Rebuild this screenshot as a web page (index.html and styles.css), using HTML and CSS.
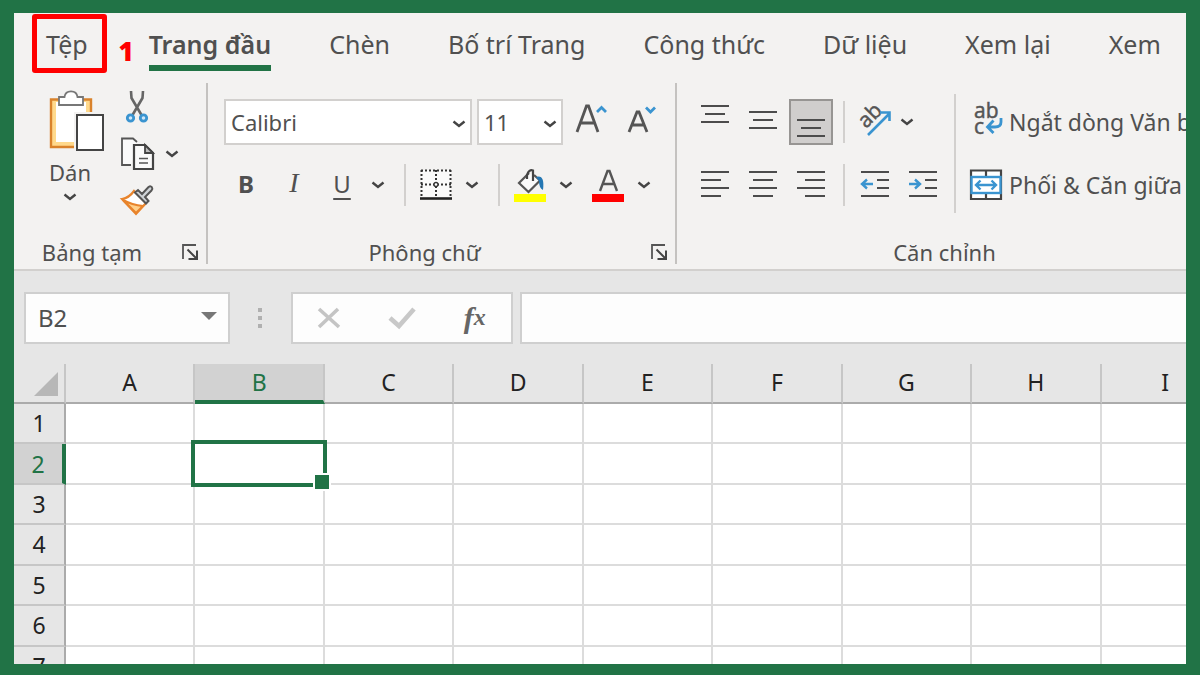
FILE: index.html
```html
<!DOCTYPE html>
<html lang="vi">
<head>
    <meta charset="UTF-8">
    <meta name="viewport" content="width=device-width, initial-scale=1.0">
    <title>Excel</title>
    <link rel="stylesheet" href="styles.css">
</head>
<body>
    <svg class="defs" aria-hidden="true">
        <symbol id="chevron" viewBox="0 0 14 10">
            <path d="M1.5 2.5 L7 7 L12.5 2.5" fill="none" stroke="#444" stroke-width="2.4"/>
        </symbol>
        <symbol id="launcher" viewBox="0 0 18 18">
            <path d="M2 16 V2 H15" fill="none" stroke="#555" stroke-width="1.8"/>
            <path d="M6.5 6.5 L15 15 M16 7.5 V16 H7.5" fill="none" stroke="#444" stroke-width="2"/>
        </symbol>
    </svg>

    <div class="window">
        <nav class="tabs">
            <button class="tab tab-file">Tệp<span class="mark"></span><span class="step">1</span></button>
            <button class="tab active">Trang đầu</button>
            <button class="tab">Chèn</button>
            <button class="tab">Bố trí Trang</button>
            <button class="tab">Công thức</button>
            <button class="tab">Dữ liệu</button>
            <button class="tab">Xem lại</button>
            <button class="tab">Xem</button>
        </nav>

        <div class="ribbon">
            <section class="group clipboard">
                <div class="clipboard-tools">
                    <button class="paste">
                        <svg width="56" height="62" viewBox="0 0 56 62">
                            <rect x="2" y="9" width="40" height="48" fill="#ffd98c"/>
                            <rect x="7" y="12" width="30" height="40" fill="#fff"/>
                            <path d="M42 24 V9.5 H2 V57 H26" fill="none" stroke="#d9822b" stroke-width="2.4"/>
                            <path d="M10 15 V7 H15.5 C16.5 -0.5 27.5 -0.5 28.5 7 H34 V15 Z" fill="#fff" stroke="#777" stroke-width="1.8"/>
                            <rect x="25" y="22" width="31" height="40" fill="#f3f2f1"/>
                            <rect x="28" y="25" width="26" height="35" fill="#fff" stroke="#444" stroke-width="2"/>
                        </svg>
                        <span>Dán</span>
                        <svg class="paste-more" width="14" height="10"><use href="#chevron"/></svg>
                    </button>
                    <div class="clipboard-side">
                        <button aria-label="Cắt">
                            <svg width="24" height="34" viewBox="0 0 24 34">
                                <path d="M6 1 L6.5 8 L16.5 25 M18 1 L17.5 8 L7.5 25" fill="none" stroke="#666" stroke-width="2.6"/>
                                <circle cx="5.5" cy="28" r="3.2" fill="#cfe6f7" stroke="#3a94d0" stroke-width="2.8"/>
                                <circle cx="18.5" cy="28" r="3.2" fill="#cfe6f7" stroke="#3a94d0" stroke-width="2.8"/>
                            </svg>
                        </button>
                        <div class="copy-row">
                            <button aria-label="Sao chép">
                                <svg width="34" height="34" viewBox="0 0 34 34">
                                    <path d="M11 28 H2 V1.5 H13 L17 5" fill="#fafafa" stroke="#555" stroke-width="1.8"/>
                                    <path d="M14 8 H25 L33 16 V32 H14 Z" fill="#fafafa" stroke="#444" stroke-width="2.2"/>
                                    <path d="M25 8 V16 H33 Z" fill="#bbb" stroke="#444" stroke-width="1.8"/>
                                    <path d="M19 21.5 H28 M19 26 H28" stroke="#555" stroke-width="1.6"/>
                                </svg>
                            </button>
                            <button class="drop" aria-label="Tùy chọn sao chép"><svg width="14" height="10"><use href="#chevron"/></svg></button>
                        </div>
                        <button aria-label="Sao chép định dạng">
                            <svg width="34" height="32" viewBox="0 0 34 32">
                                <path d="M2 15 Q9 14 14 7 L26 19 L16 30 Z" fill="#fff" stroke="#e8842c" stroke-width="2.2"/>
                                <path d="M3 16 Q12 21 23 22 L16 29 Z" fill="#ffd08a" stroke="#e8842c" stroke-width="2.2"/>
                                <path d="M15 8.5 L18 6 L22 10 L28.5 3 Q31 1.5 32 3.5 Q33 5 31.5 6.5 L25 13 L28.5 17 L26 19.5 Z" fill="#d0d4d8" stroke="#555" stroke-width="2"/>
                            </svg>
                        </button>
                    </div>
                </div>
                <footer class="group-footer">
                    <span>Bảng tạm</span>
                    <button class="launch" aria-label="Bảng tạm"><svg width="18" height="18"><use href="#launcher"/></svg></button>
                </footer>
            </section>

            <section class="group font">
                <div class="row font-pick">
                    <div class="combo combo-name">
                        <select aria-label="Phông chữ"><option>Calibri</option></select>
                        <svg width="14" height="10"><use href="#chevron"/></svg>
                    </div>
                    <div class="combo combo-size">
                        <select aria-label="Cỡ chữ"><option>11</option></select>
                        <svg width="14" height="10"><use href="#chevron"/></svg>
                    </div>
                    <button class="resize" aria-label="Tăng cỡ chữ">
                        <svg width="32" height="44" viewBox="0 0 32 44">
                            <path d="M2 32 L11.5 6 H13.5 L23 32 M5.5 23 H19.5" fill="none" stroke="#555" stroke-width="2.8"/>
                            <path d="M22 12 L26.5 7.5 L31 12" fill="none" stroke="#3a94d0" stroke-width="2.8"/>
                        </svg>
                    </button>
                    <button class="resize" aria-label="Giảm cỡ chữ">
                        <svg width="32" height="44" viewBox="0 0 32 44">
                            <path d="M3 32 L11 12 H13 L21 32 M6 25 H18" fill="none" stroke="#555" stroke-width="2.8"/>
                            <path d="M20 7.5 L24.5 12 L29 7.5" fill="none" stroke="#3a94d0" stroke-width="2.8"/>
                        </svg>
                    </button>
                </div>
                <div class="row">
                    <button class="tool bold">B</button>
                    <button class="tool italic">I</button>
                    <button class="tool underline">U</button>
                    <button class="drop" aria-label="Kiểu gạch chân"><svg width="14" height="10"><use href="#chevron"/></svg></button>
                    <span class="sep"></span>
                    <button class="tool" aria-label="Viền">
                        <svg width="32" height="44" viewBox="0 0 32 44">
                            <rect x="1" y="7" width="30" height="28" fill="#fafafa"/>
                            <path d="M1 7.5 H31 M1 21.5 H31" stroke="#333" stroke-width="2" stroke-dasharray="2 2"/>
                            <path d="M1.5 7 V34 M16 7 V34 M30.5 7 V34" stroke="#333" stroke-width="2" stroke-dasharray="2 2"/>
                            <circle cx="16" cy="21.5" r="2" fill="#fff" stroke="#333" stroke-width="1.3"/>
                            <path d="M0 35.5 H32" stroke="#222" stroke-width="2.6"/>
                        </svg>
                    </button>
                    <button class="drop" aria-label="Kiểu viền"><svg width="14" height="10"><use href="#chevron"/></svg></button>
                    <span class="sep"></span>
                    <button class="tool" aria-label="Màu tô">
                        <svg width="32" height="44" viewBox="0 0 32 44">
                            <path d="M15 10 L5 20 L14.5 29 L26 17.5 L20 12" fill="#fafafa" stroke="#555" stroke-width="2.2"/>
                            <path d="M13 16 V12 Q15 6 19 7.5 V18" fill="none" stroke="#444" stroke-width="2.2"/>
                            <path d="M22 14 Q31 11 29 27 Q25 25 25 18 Z" fill="#2477b3"/>
                            <rect y="31" width="32" height="8" fill="#ff0"/>
                        </svg>
                    </button>
                    <button class="drop drop-gap" aria-label="Chọn màu tô"><svg width="14" height="10"><use href="#chevron"/></svg></button>
                    <button class="tool" aria-label="Màu phông chữ">
                        <svg width="32" height="44" viewBox="0 0 32 44">
                            <path d="M8 28 L15.5 8 H17.5 L25 28 M11 21 H22" fill="none" stroke="#555" stroke-width="2.4"/>
                            <rect y="31" width="32" height="8" fill="#f00"/>
                        </svg>
                    </button>
                    <button class="drop" aria-label="Chọn màu phông chữ"><svg width="14" height="10"><use href="#chevron"/></svg></button>
                </div>
                <footer class="group-footer">
                    <span>Phông chữ</span>
                    <button class="launch" aria-label="Phông chữ"><svg width="18" height="18"><use href="#launcher"/></svg></button>
                </footer>
            </section>

            <section class="group align">
                <div class="align-tools">
                    <div class="align-icons">
                        <div class="row">
                            <button class="tool" aria-label="Căn trên"><svg width="30" height="44"><path class="lines" d="M1 6 H29 M5 14 H25 M1 22 H29"/></svg></button>
                            <button class="tool" aria-label="Căn giữa dọc"><svg width="30" height="44"><path class="lines" d="M1 12 H29 M5 20 H25 M1 28 H29"/></svg></button>
                            <button class="tool pressed" aria-label="Căn dưới"><svg width="30" height="44"><path class="lines" d="M1 20 H29 M5 28 H25 M1 36 H29"/></svg></button>
                            <span class="sep sep-tight"></span>
                            <button class="tool orient" aria-label="Hướng">
                                <svg width="36" height="44" viewBox="0 0 36 44">
                                    <text class="glyph" x="0" y="0" font-size="21" transform="translate(11 29) rotate(-45)">ab</text>
                                    <path d="M13 35 L34 14 M25 12.5 H34.5 V21" fill="none" stroke="#3a94d0" stroke-width="2.6"/>
                                </svg>
                            </button>
                            <button class="drop" aria-label="Chọn hướng"><svg width="14" height="10"><use href="#chevron"/></svg></button>
                        </div>
                        <div class="row">
                            <button class="tool" aria-label="Căn trái"><svg width="30" height="44"><path class="lines" d="M1 9 H29 M1 17 H21 M1 25 H29 M1 33 H21"/></svg></button>
                            <button class="tool" aria-label="Căn giữa"><svg width="30" height="44"><path class="lines" d="M1 9 H29 M5 17 H25 M1 25 H29 M5 33 H25"/></svg></button>
                            <button class="tool" aria-label="Căn phải"><svg width="30" height="44"><path class="lines" d="M1 9 H29 M9 17 H29 M1 25 H29 M9 33 H29"/></svg></button>
                            <span class="sep sep-tight"></span>
                            <button class="tool" aria-label="Giảm thụt lề"><svg width="30" height="44"><path class="lines" d="M1 9 H29 M17 17 H29 M17 25 H29 M1 33 H29"/><path class="arrow" d="M13 21 H2 M7 16.5 L2 21 L7 25.5"/></svg></button>
                            <button class="tool" aria-label="Tăng thụt lề"><svg width="30" height="44"><path class="lines" d="M1 9 H29 M17 17 H29 M17 25 H29 M1 33 H29"/><path class="arrow" d="M1 21 H12 M7 16.5 L12 21 L7 25.5"/></svg></button>
                        </div>
                    </div>
                    <div class="align-text">
                        <button class="wide">
                            <svg width="34" height="44" viewBox="0 0 34 44">
                                <text class="glyph" x="4" y="18" font-size="21">ab</text>
                                <text class="glyph" x="4" y="34" font-size="21">c</text>
                                <path d="M31 18 V22 Q31 27 25 27 H18 M23.500 20.500 L17.500 27 L23.500 33" fill="none" stroke="#3a94d0" stroke-width="2.800"/>
                            </svg>
                            Ngắt dòng Văn bản
                        </button>
                        <button class="wide">
                            <svg width="34" height="44" viewBox="0 0 34 44">
                                <path d="M1 7.500 H31 V36 H1 Z M16 7 V14 M16 30 V36" fill="#fff" stroke="#444" stroke-width="2.2"/>
                                <rect x="1.500" y="14" width="29" height="16" fill="#fff" stroke="#3a94d0" stroke-width="2.400"/>
                                <path d="M6 22 H26 M10.500 17.500 L6 22 L10.500 26.500 M21.500 17.500 L26 22 L21.500 26.500" fill="none" stroke="#3a94d0" stroke-width="2.400"/>
                            </svg>
                            Phối &amp; Căn giữa
                        </button>
                    </div>
                </div>
                <footer class="group-footer"><span>Căn chỉnh</span></footer>
            </section>
        </div>

        <div class="formula-bar">
            <div class="name-box">
                <input type="text" value="B2" aria-label="Hộp tên">
                <button aria-label="Danh sách tên"><svg width="16" height="10"><path d="M0 1 H16 L8 9 Z" fill="#777"/></svg></button>
            </div>
            <svg class="grip" width="6" height="22"><path d="M1 1 h4 v4 h-4 Z M1 9 h4 v4 h-4 Z M1 17 h4 v4 h-4 Z" fill="#b0b0b0"/></svg>
            <div class="fx-box">
                <button aria-label="Hủy"><svg width="26" height="24"><path d="M3 3 L23 21 M22 3 L3 21" fill="none" stroke="#c4c4c4" stroke-width="3.6"/></svg></button>
                <button aria-label="Nhập"><svg width="28" height="24"><path d="M2 12 L11 20 L26 3" fill="none" stroke="#c8c8c8" stroke-width="4.6"/></svg></button>
                <button class="fx" aria-label="Chèn hàm">f<small>x</small></button>
            </div>
            <input class="formula" type="text" aria-label="Thanh công thức">
        </div>

        <div class="sheet">
            <table>
                <thead>
                    <tr>
                        <th class="corner"><svg width="24" height="24"><path d="M24 0 V24 H0 Z" fill="#b7b7b7"/></svg></th>
                        <th>A</th><th class="current">B</th><th>C</th><th>D</th><th>E</th><th>F</th><th>G</th><th>H</th><th>I</th>
                    </tr>
                </thead>
                <tbody>
                    <tr><th>1</th><td></td><td></td><td></td><td></td><td></td><td></td><td></td><td></td><td></td></tr>
                    <tr><th class="current">2</th><td></td><td class="selected"><span class="cursor"></span></td><td></td><td></td><td></td><td></td><td></td><td></td><td></td></tr>
                    <tr><th>3</th><td></td><td></td><td></td><td></td><td></td><td></td><td></td><td></td><td></td></tr>
                    <tr><th>4</th><td></td><td></td><td></td><td></td><td></td><td></td><td></td><td></td><td></td></tr>
                    <tr><th>5</th><td></td><td></td><td></td><td></td><td></td><td></td><td></td><td></td><td></td></tr>
                    <tr><th>6</th><td></td><td></td><td></td><td></td><td></td><td></td><td></td><td></td><td></td></tr>
                    <tr><th>7</th><td></td><td></td><td></td><td></td><td></td><td></td><td></td><td></td><td></td></tr>
                </tbody>
            </table>
        </div>
    </div>
</body>
</html>
```
FILE: styles.css
```css
* {
    margin: 0;
    padding: 0;
    box-sizing: border-box;
}

body {
    height: 100vh;
    padding: 13px 14px 11px;
    background: #217346;
    font-family: 'Noto Sans', 'Open Sans', sans-serif;
    font-size: 22px;
    color: #505050;
    overflow: hidden;
}

button, input, select {
    font: inherit;
    color: inherit;
    background: none;
    border: none;
    border-radius: 0;
}

button {
    display: flex;
    align-items: center;
    justify-content: center;
    white-space: nowrap;
}

svg {
    display: block;
    flex: none;
    overflow: visible;
}

.defs {
    position: absolute;
    width: 0;
    height: 0;
}

.window {
    display: flex;
    flex-direction: column;
    height: 100%;
    background: #e6e6e6;
    overflow: hidden;
}

/* tabs */
.tabs {
    display: flex;
    gap: 58px;
    height: 70px;
    padding: 8px 0 12px 32px;
    background: #f3f2f1;
    font-size: 25px;
}

.tab {
    position: relative;
    height: 50px;
    padding-bottom: 4px;
    flex: none;
}

.tab-file {
    padding-right: 3px;
}

.tab.active {
    font-weight: 600;
}

.tab.active::after {
    content: '';
    position: absolute;
    left: 0;
    right: 0;
    bottom: 0;
    height: 6px;
    background: #217346;
}

.mark {
    position: absolute;
    top: -7px;
    bottom: -2px;
    left: -14px;
    right: -16px;
    border: 5px solid #f00;
    border-radius: 3px;
}

.step {
    position: absolute;
    top: 14px;
    right: -43px;
    color: #f00;
    font-family: 'Open Sans', sans-serif;
    font-size: 26px;
    font-weight: 800;
    line-height: 32px;
}

/* ribbon */
.ribbon {
    display: flex;
    padding-bottom: 5px;
    background: #f3f2f1;
    border-bottom: 2px solid #d2d0ce;
}

.group {
    display: flex;
    flex-direction: column;
    flex: none;
    border-right: 2px solid #c4c2c0;
}

.group-footer {
    display: flex;
    align-items: center;
    margin-top: auto;
    height: 24px;
    line-height: 24px;
}

.group-footer span {
    flex: 1;
    text-align: center;
}

.launch {
    width: 32px;
    height: 24px;
}

.row {
    display: flex;
    align-items: center;
    height: 46px;
}

.tool {
    width: 48px;
    height: 44px;
    flex: none;
}

.drop {
    width: 24px;
    height: 44px;
    flex: none;
}

.drop-gap {
    margin-right: 6px;
}

.sep {
    width: 2px;
    height: 42px;
    margin: 0 6px 0 14px;
    background: #d2d0ce;
}

.sep-tight {
    margin-left: 8px;
}

.clipboard {
    width: 194px;
}

.clipboard-tools {
    display: flex;
    gap: 8px;
    padding: 7px 0 0 35px;
}

.paste {
    flex-direction: column;
    align-items: flex-start;
    justify-content: flex-start;
    gap: 5px;
    width: 56px;
    height: 124px;
    line-height: 30px;
}

.paste-more {
    margin-left: 14px;
}

.clipboard-side {
    display: flex;
    flex-direction: column;
    align-items: flex-start;
    gap: 13px;
    padding-left: 7px;
}

.clipboard-side > button:first-child {
    width: 34px;
}

.copy-row {
    display: flex;
    align-items: center;
    height: 34px;
    gap: 6px;
}

.clipboard .group-footer span {
    padding-right: 4px;
}

.font {
    width: 469px;
    height: 181px;
    padding: 16px 0 0 14px;
    gap: 17px;
}

.font .group-footer span {
    padding-right: 16px;
}

.font-pick {
    padding-left: 2px;
    gap: 5px;
}

.combo {
    position: relative;
    height: 46px;
    background: #fff;
    border: 2px solid #d2d0ce;
}

.combo select {
    width: 100%;
    height: 100%;
    padding: 0 5px;
    appearance: none;
}

.combo svg {
    position: absolute;
    right: 4px;
    top: 18px;
    pointer-events: none;
}

.combo-name {
    width: 248px;
}

.combo-size {
    width: 86px;
}

.resize {
    width: 46px;
    height: 44px;
}

.bold {
    font-size: 24px;
    font-weight: 700;
}

.italic {
    font-family: 'Liberation Serif', serif;
    font-size: 28px;
    font-style: italic;
}

.underline {
    font-size: 24px;
    text-decoration: underline;
    text-decoration-thickness: 2px;
    text-underline-offset: 5px;
}

.bold, .italic, .underline {
    padding-bottom: 4px;
}

.align {
    flex: 1;
    min-width: 0;
    padding: 11px 0 0 14px;
    border-right: none;
    overflow: hidden;
}

.align .group-footer {
    padding-left: 12px;
}

.align-tools {
    display: flex;
}

.align-icons {
    display: grid;
    gap: 17px;
    width: 265px;
    padding: 5px 0;
    flex: none;
    border-right: 2px solid #d2d0ce;
}

.align-text {
    display: grid;
    gap: 17px;
    padding: 5px 0 5px 14px;
}

.wide {
    height: 46px;
    gap: 5px;
    justify-content: flex-start;
    font-size: 23px;
}

.pressed {
    width: 44px;
    height: 46px;
    margin: 0 2px;
    background: #d0cecd;
    border: 2px solid #979593;
}

.orient {
    width: 44px;
}

.lines {
    fill: none;
    stroke: #4c4c4c;
    stroke-width: 2;
}

.arrow {
    fill: none;
    stroke: #3a94d0;
    stroke-width: 2.4;
}

.glyph {
    fill: #555;
    stroke: #555;
    stroke-width: 0.5;
    font-family: 'Open Sans', sans-serif;
}

/* formula bar */
.formula-bar {
    display: flex;
    align-items: center;
    height: 93px;
    padding: 0 0 0 10px;
}

.name-box {
    display: flex;
    width: 206px;
    height: 52px;
    background: #fdfdfd;
    border: 2px solid #cfcfcf;
}

.name-box input {
    width: 164px;
    padding-left: 12px;
    font-size: 24px;
}

.name-box button {
    width: 38px;
    padding-bottom: 4px;
}

.grip {
    margin: 0 28px 0 27px;
}

.fx-box {
    display: flex;
    width: 222px;
    height: 52px;
    background: #fdfdfd;
    border: 2px solid #cfcfcf;
}

.fx-box button {
    flex: 1;
}

.fx {
    color: #666;
    font: italic 700 30px 'Liberation Serif', serif;
}

.fx small {
    font-size: 24px;
}

.formula {
    flex: 1;
    height: 52px;
    margin-left: 7px;
    padding: 0 12px;
    background: #fdfdfd;
    border: 2px solid #cfcfcf;
    border-right: none;
}

/* sheet */
.sheet {
    flex: 1;
    overflow: hidden;
}

table {
    width: calc(100% + 45px);
    height: 323px;
    table-layout: fixed;
    border-spacing: 0;
}

th {
    height: 40px;
    background: #e6e6e6;
    border-right: 2px solid #bdbdbd;
    border-bottom: 2px solid #c6c6c6;
    color: #222;
    font-size: 23px;
    font-weight: 400;
    line-height: 30px;
}

thead th {
    padding-bottom: 2px;
    border-right-color: #c6c6c6;
    border-bottom-color: #ababab;
}

tbody th {
    border-right-color: #ababab;
}

th.corner {
    width: 52px;
}

.corner svg {
    margin: 4px 0 0 20px;
}

th.current {
    background: #d2d2d2;
    color: #217346;
}

thead th.current {
    padding-bottom: 0;
    border-bottom: 4px solid #217346;
}

tbody th.current {
    border-right: 4px solid #217346;
}

td {
    background: #fff;
    border-right: 2px solid #dcdcdc;
    border-bottom: 2px solid #dcdcdc;
}

.selected {
    position: relative;
}

.cursor {
    position: absolute;
    inset: -4px;
    border: 4px solid #217346;
}

.cursor::after {
    content: '';
    position: absolute;
    right: -8px;
    bottom: -8px;
    width: 14px;
    height: 14px;
    background: #217346;
    border: 2px solid #fff;
}
```
